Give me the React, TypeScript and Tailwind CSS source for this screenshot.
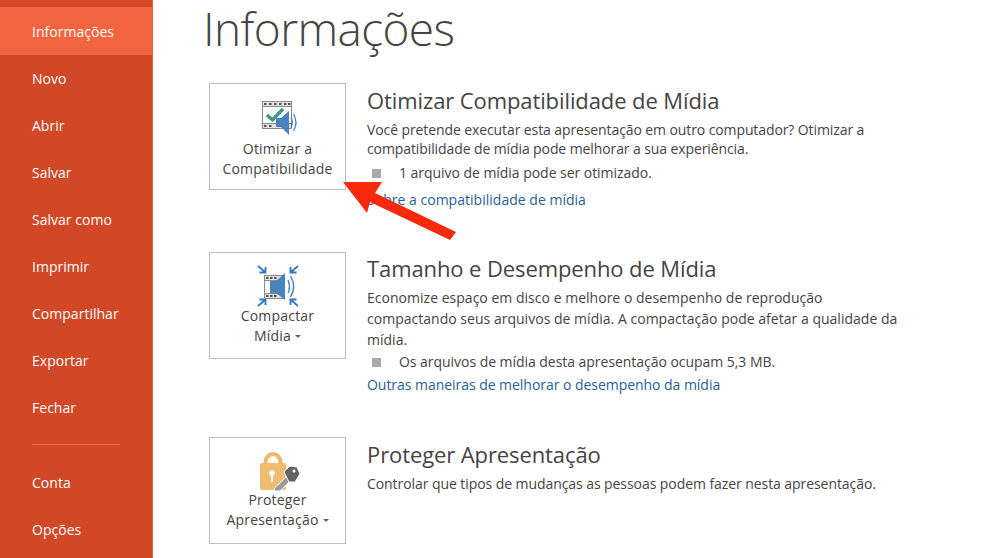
const font = { fontFamily: '"Open Sans","Noto Sans",sans-serif' };

const navTop = ["Novo", "Abrir", "Salvar", "Salvar como", "Imprimir", "Compartilhar", "Exportar", "Fechar"];

function NavItem({ label }: { label: string }) {
  return <div className="h-[47px] flex items-center pl-8 text-[14px] tracking-[0.02px] text-white">{label}</div>;
}

function OptimizeIcon() {
  return (
    <svg width="40" height="38" viewBox="0 0 40 38" className="block">
      <rect x="2.5" y="2.5" width="29" height="27" fill="#fff" stroke="#8a8a8a" />
      <rect x="2.5" y="2.5" width="29" height="5" fill="#e2e2e2" stroke="#8a8a8a" />
      <rect x="2.5" y="24.5" width="29" height="5" fill="#e2e2e2" stroke="#8a8a8a" />
      {[4, 9, 14, 19, 24, 28].map((x) => (
        <g key={x}>
          <rect x={x} y="4" width="2.5" height="2" fill="#555" />
          {x < 14 && <rect x={x} y="26" width="2.5" height="2" fill="#555" />}
        </g>
      ))}
      <path d="M7 16 L12.5 21 L23 10" fill="none" stroke="#3f9a7d" strokeWidth="3.4" />
      <path d="M16 19 H21 L29 12 V36 L21 28 H16 Z" fill="#4a82bd" />
      <path d="M31 18 Q33.5 23.5 31 29 M33.5 15 Q38.5 23.5 33.5 32" fill="none" stroke="#4a82bd" strokeWidth="1.3" />
    </svg>
  );
}

function CompressIcon() {
  return (
    <svg width="44" height="42" viewBox="0 0 44 42" className="block">
      <g stroke="#2f78c4" strokeWidth="1.8" fill="none">
        <path d="M2 1 L9 7 M3.5 7.5 H9.5 V2" />
        <path d="M42 1 L35 7 M40.5 7.5 H34.5 V2" />
        <path d="M2 41 L9 35 M3.5 34.5 H9.5 V40" />
        <path d="M42 41 L35 35 M40.5 34.5 H34.5 V40" />
      </g>
      <rect x="8.5" y="10.5" width="20" height="23" fill="#fff" stroke="#8a8a8a" />
      <rect x="8.5" y="10.5" width="20" height="5" fill="#e2e2e2" stroke="#8a8a8a" />
      <rect x="8.5" y="28.5" width="20" height="5" fill="#e2e2e2" stroke="#8a8a8a" />
      {[10, 14, 18].map((x) => (
        <g key={x}>
          <rect x={x} y="12" width="2.5" height="2" fill="#555" />
          <rect x={x} y="30" width="2.5" height="2" fill="#555" />
        </g>
      ))}
      <path d="M14 16 H20 L29 8 V35 L20 28 H14 Z" fill="#4a82bd" />
      <path d="M32 15 Q35 21.5 32 28 M34.5 11 Q41 21.5 34.5 32" fill="none" stroke="#4a82bd" strokeWidth="1.4" />
    </svg>
  );
}

function LockIcon() {
  return (
    <svg width="42" height="40" viewBox="0 0 42 40" className="block">
      <path d="M6.5 13 V10 A7.5 8 0 0 1 21.5 10 V13" fill="none" stroke="#eeb868" strokeWidth="4" />
      <rect x="1" y="11" width="26" height="27" rx="2" fill="#efbd72" />
      <circle cx="13" cy="21" r="2.8" fill="#fff" />
      <rect x="12" y="21" width="2" height="9" fill="#fff" />
      <path d="M15 37 L29 23 L33 27 L21 39 H16 Z" fill="#9a9a9a" stroke="#fff" strokeWidth="1" />
      <path d="M25 20 L31 14 L38 15 L41 22 L36 30 L30 30 Z" fill="#636363" stroke="#fff" strokeWidth="1" />
      <circle cx="35" cy="19" r="1.5" fill="#fff" />
    </svg>
  );
}

function Caret() {
  return <span className="inline-block ml-1 align-middle w-0 h-0 border-x-[3px] border-x-transparent border-t-[3px] border-t-[#666]" />;
}

function ActionButton({ icon, lines, caret, iconClass }: { icon: React.ReactNode; lines: [string, string]; caret?: boolean; iconClass: string }) {
  return (
    <div className="w-[137px] h-[107px] shrink-0 bg-white border border-[#bdbdbd] flex flex-col items-center text-[14px] leading-[19.5px] text-[#444]">
      <div className={iconClass}>{icon}</div>
      <div className="text-center font-medium tracking-[0.2px] whitespace-nowrap">
        <div>{lines[0]}</div>
        <div>
          {lines[1]}
          {caret && <Caret />}
        </div>
      </div>
    </div>
  );
}

function Bullet({ children, className }: { children: React.ReactNode; className: string }) {
  return (
    <div className={`flex items-center text-[14px] leading-[20px] text-[#444] tracking-[-0.04px] ${className}`}>
      <span className="w-[9px] h-[9px] bg-[#a9a9a9] ml-[5px] mr-[18px]" />
      {children}
    </div>
  );
}

export default function App() {
  return (
    <div className="w-[984px] h-[558px] overflow-hidden relative flex bg-white" style={font}>
      <aside className="w-[153px] h-full shrink-0 bg-[#d24726] border-r border-[#e8623f] pt-[7px] flex flex-col">
        <div className="h-[48px] flex items-center pl-8 text-[14px] tracking-[0.02px] text-white bg-[#f36440]">Informações</div>
        {navTop.map((l) => (
          <NavItem key={l} label={l} />
        ))}
        <div className="mt-[13px] mb-[14px] ml-8 w-[88px] h-px bg-[#ec6a48]" />
        <NavItem label="Conta" />
        <NavItem label="Opções" />
      </aside>

      <main className="flex-1 pl-[50px]">
        <h1 className="text-[46px] leading-[56px] font-light text-[#444] tracking-[-0.6px]">Informações</h1>

        <section className="flex ml-[6px] mt-[27px] h-[169px]">
          <ActionButton icon={<OptimizeIcon />} lines={["Otimizar a", "Compatibilidade"]} iconClass="mt-[15px] h-[40px] ml-[4px]" />
          <div className="ml-[21px] w-[560px]">
            <h2 className="text-[22px] leading-[28px] mt-[3px] text-[#444] tracking-[-0.1px] whitespace-nowrap">Otimizar Compatibilidade de Mídia</h2>
            <p className="text-[14px] leading-[19px] mt-[6px] text-[#444] tracking-[-0.1px]">
              Você pretende executar esta apresentação em outro computador? Otimizar a
              <br />
              compatibilidade de mídia pode melhorar a sua experiência.
            </p>
            <Bullet className="mt-[5px]">1 arquivo de mídia pode ser otimizado.</Bullet>
            <div className="text-[14px] leading-[20px] mt-[7px] text-[#2a6099] tracking-[0.02px]">Sobre a compatibilidade de mídia</div>
          </div>
        </section>

        <section className="flex ml-[6px] h-[185px]">
          <ActionButton icon={<CompressIcon />} lines={["Compactar", "Mídia"]} caret iconClass="mt-[12px] h-[41px]" />
          <div className="ml-[21px] w-[570px]">
            <h2 className="text-[22px] leading-[28px] mt-[2px] text-[#444] tracking-[-0.1px] whitespace-nowrap">Tamanho e Desempenho de Mídia</h2>
            <p className="text-[14px] leading-[21px] mt-[5px] text-[#444] tracking-[0.02px]">
              Economize espaço em disco e melhore o desempenho de reprodução
              <br />
              compactando seus arquivos de mídia. A compactação pode afetar a qualidade da
              <br />
              mídia.
            </p>
            <Bullet className="mt-[2px]">Os arquivos de mídia desta apresentação ocupam 5,3 MB.</Bullet>
            <div className="text-[14px] leading-[20px] mt-[3px] text-[#2a6099] tracking-[-0.04px] whitespace-nowrap">Outras maneiras de melhorar o desempenho da mídia</div>
          </div>
        </section>

        <section className="flex ml-[6px]">
          <ActionButton icon={<LockIcon />} lines={["Proteger", "Apresentação"]} caret iconClass="mt-[14px] h-[38px] ml-[4px]" />
          <div className="ml-[21px] w-[570px]">
            <h2 className="text-[22px] leading-[28px] mt-[3px] text-[#444] tracking-[-0.1px] whitespace-nowrap">Proteger Apresentação</h2>
            <p className="text-[14px] leading-[20px] mt-[6px] text-[#444] tracking-[-0.07px] whitespace-nowrap">Controlar que tipos de mudanças as pessoas podem fazer nesta apresentação.</p>
          </div>
        </section>
      </main>

      <svg width="130" height="80" viewBox="0 0 130 80" className="absolute left-[340px] top-[180px]">
        <path d="M3 2 L42 2 L35 13 L116 52 L110 60 L30 22 L27 33 Z" fill="#f8290c" />
      </svg>
    </div>
  );
}
